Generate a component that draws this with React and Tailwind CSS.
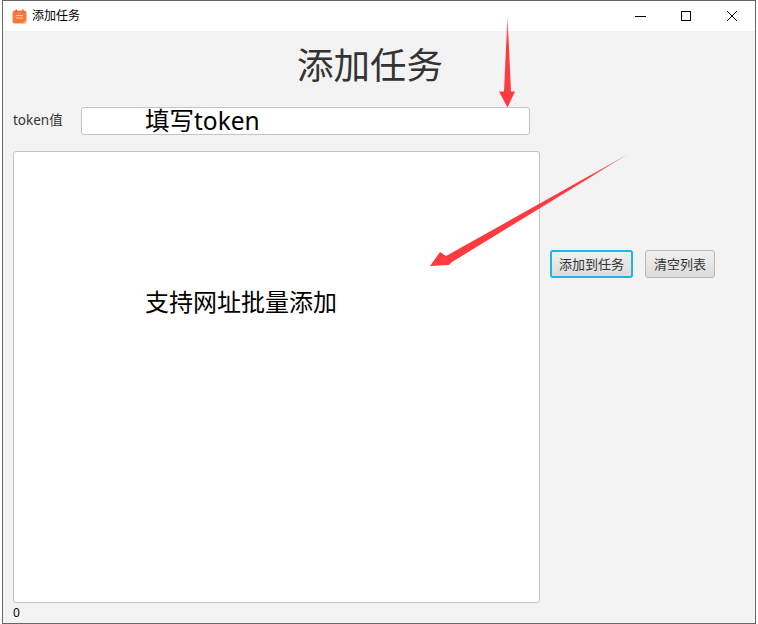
import React from "react";

const font = { fontFamily: '"Noto Sans", "Noto Sans CJK SC", sans-serif' };

function Arrows() {
  return (
    <svg className="absolute left-0 top-0 pointer-events-none" width="758" height="624" viewBox="0 0 758 624">
      <defs>
        <linearGradient id="a1" x1="508" y1="15" x2="508" y2="108" gradientUnits="userSpaceOnUse">
          <stop offset="0" stopColor="#ff3b3f" stopOpacity="0.5" />
          <stop offset="0.3" stopColor="#ff3b3f" />
        </linearGradient>
        <linearGradient id="a2" x1="630" y1="153" x2="430" y2="266" gradientUnits="userSpaceOnUse">
          <stop offset="0" stopColor="#ff3b3f" stopOpacity="0.45" />
          <stop offset="0.2" stopColor="#ff3b3f" />
        </linearGradient>
      </defs>
      <polygon points="507.5,15 511,91.5 515,91.5 507.5,107.5 499,91.5 504,91.5" fill="url(#a1)" />
      <polygon points="630,153 452,262 449,265 430,266 440,252 446,256" fill="url(#a2)" />
    </svg>
  );
}

export default function App() {
  return (
    <div className="relative w-[758px] h-[624px] bg-white" style={font}>
      <div className="ml-[2px] mr-[2px] h-[624px] flex flex-col border-x border-b border-t border-[#666666] bg-[#f3f3f3]">
        <div className="h-[30px] shrink-0 bg-white flex items-center">
          <svg className="ml-[9px]" width="15" height="15" viewBox="0 0 15 15">
            <rect x="0.5" y="1.5" width="14" height="13" rx="2.5" fill="#f5793f" />
            <rect x="3.5" y="0.5" width="1.5" height="3" fill="#e8602a" />
            <rect x="10" y="0.5" width="1.5" height="3" fill="#e8602a" />
            <rect x="4" y="6" width="7" height="1" fill="#ffc9a8" />
            <rect x="4" y="8.5" width="7" height="1" fill="#ffc9a8" />
            <path d="M14.5 10.5V12A2.5 2.5 0 0 1 12 14.5H10.5Z" fill="#fbb48f" />
          </svg>
          <span className="ml-[5px] text-[12px] leading-none text-black">添加任务</span>
          <div className="ml-auto flex items-center">
            <svg width="14" height="14" viewBox="0 0 14 14" className="mr-[31px]">
              <path d="M1 7.5H12" stroke="#000" strokeWidth="1" />
            </svg>
            <svg width="14" height="14" viewBox="0 0 14 14" className="mr-[32px]">
              <rect x="2.5" y="2.5" width="9" height="9" fill="none" stroke="#000" strokeWidth="1" />
            </svg>
            <svg width="14" height="14" viewBox="0 0 14 14" className="mr-[16px]">
              <path d="M2 2L12 12M12 2L2 12" stroke="#000" strokeWidth="1" />
            </svg>
          </div>
        </div>

        <div className="flex-1 flex flex-col pl-[10px]">
          <div className="h-[76px] shrink-0 flex items-center justify-center pr-[28px] pb-[8px] text-[36.5px] leading-none text-[#333333]">
            添加任务
          </div>
          <div className="flex items-center h-[28px] shrink-0">
            <span className="w-[68px] text-[13.5px] leading-none text-[#333333]">token值</span>
            <div className="w-[449px] h-[28px] bg-white border border-[#c4c4c4] rounded-[3px] flex items-center pl-[63px] text-[24.5px] leading-none text-black">
              填写token
            </div>
          </div>
          <div className="flex items-start mt-[16px]">
            <div className="w-[527px] h-[452px] bg-white border border-[#c4c4c4] rounded-[3px] pl-[131px] pt-[132px] text-[24px] leading-[36px] text-black">
              支持网址批量添加
            </div>
            <button className="ml-[10px] mt-[99px] w-[83px] h-[28px] rounded-[3px] border-2 border-[#22b4e6] bg-gradient-to-b from-[#f0f0f0] to-[#dcdcdc] text-[13px] leading-none text-[#333333]">
              添加到任务
            </button>
            <button className="ml-[12px] mt-[99px] w-[70px] h-[28px] rounded-[3px] border border-[#b8b8b8] bg-gradient-to-b from-[#f0f0f0] to-[#dcdcdc] text-[13px] leading-none text-[#333333]">
              清空列表
            </button>
          </div>
          <div className="mt-[3px] text-[12px] leading-[14px] text-black">0</div>
        </div>
      </div>
      <Arrows />
    </div>
  );
}
